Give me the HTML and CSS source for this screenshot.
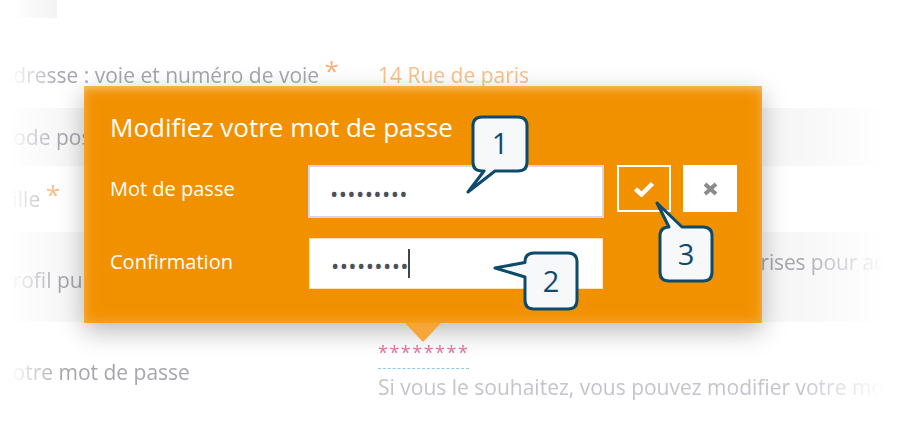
FILE: index.html
```html
<!DOCTYPE html>
<html lang="fr">
<head>
  <meta charset="UTF-8">
  <meta name="viewport" content="width=device-width, initial-scale=1.0">
  <title>Modifiez votre mot de passe</title>
  <link rel="stylesheet" href="styles.css">
</head>
<body>
  <div class="page">
    <div class="form">
      <div class="strip"><span class="strip-block"></span></div>

      <div class="row row-address">
        <div class="label">Adresse : voie et numéro de voie <span class="req">*</span></div>
        <div class="value value-orange">14 Rue de paris</div>
      </div>

      <div class="row row-band row-cp">
        <div class="label">Code postal <span class="req">*</span></div>
        <div class="value value-orange">75001</div>
      </div>

      <div class="row row-city">
        <div class="label">Ville <span class="req">*</span></div>
        <div class="value value-orange">Paris</div>
      </div>

      <div class="row row-band row-profile">
        <div class="label">Profil public</div>
        <div class="value value-top">Vos données restent visibles des entreprises pour accéder</div>
      </div>

      <div class="row row-password">
        <div class="label label-top">Votre mot de passe</div>
        <div class="value value-top">
          <span class="stars">********</span>
          <p class="help">Si vous le souhaitez, vous pouvez modifier votre mot de passe</p>
        </div>
      </div>
    </div>

    <div class="popup">
      <h2 class="popup-title">Modifiez votre mot de passe</h2>
      <div class="popup-row">
        <label class="popup-label">Mot de passe</label>
        <div class="field"><span class="dots">•••••••••</span></div>
        <button class="btn btn-ok" title="Valider">
          <svg width="22" height="16" viewBox="0 0 22 16"><path d="M2.5 8l6 5.5L19.5 2.5" fill="none" stroke="#fff" stroke-width="4.5"/></svg>
        </button>
        <button class="btn btn-cancel" title="Annuler">
          <svg width="15" height="14" viewBox="0 0 15 14"><path d="M2 2l11 10M13 2L2 12" fill="none" stroke="#8b8b8b" stroke-width="4"/></svg>
        </button>
      </div>
      <div class="popup-row popup-row-confirm">
        <label class="popup-label">Confirmation</label>
        <div class="field field-confirm"><span class="dots">•••••••••</span><span class="caret"></span></div>
      </div>
    </div>

    <!-- numbered annotations -->
    <svg class="callouts" width="898" height="441" viewBox="0 0 898 441">
      <g class="callout">
        <path d="M482 117H518Q527 117 527 126V162Q527 171 518 171H495L468 192L484 171H482Q473 171 473 162V126Q473 117 482 117Z"/>
        <text x="500" y="154">1</text>
      </g>
      <g class="callout">
        <path d="M534 253H568Q577 253 577 262V300Q577 309 568 309H534Q525 309 525 300V277L495 268L525 262.5V262Q525 253 534 253Z"/>
        <text x="551" y="292">2</text>
      </g>
      <g class="callout">
        <path d="M669 227L657 203L682 227H703Q712 227 712 236V272Q712 281 703 281H669Q660 281 660 272V236Q660 227 669 227Z"/>
        <text x="686" y="265">3</text>
      </g>
    </svg>
  </div>
</body>
</html>
```

FILE: styles.css
```css
* {
  box-sizing: border-box;
}
body {
  margin: 0;
  background: #fff;
  font-family: "Open Sans", "Liberation Sans", sans-serif;
}
.page {
  position: relative;
  width: 898px;
  height: 441px;
  overflow: hidden;
}

/* faded form behind the popup */
.form {
  color: #a6a6ae;
  font-size: 21px;
  filter: blur(0.6px);
  -webkit-mask-image: linear-gradient(90deg, transparent 10px, #000 60px, #000 800px, transparent 885px);
  mask-image: linear-gradient(90deg, transparent 10px, #000 60px, #000 800px, transparent 885px);
}
.strip {
  height: 18px;
  padding-left: 17px;
}
.strip-block {
  display: block;
  width: 40px;
  height: 18px;
  background: #f2f2f2;
}
.row {
  display: grid;
  grid-template-columns: 378px 1fr;
  align-items: center;
  white-space: nowrap;
  line-height: 28px;
}
.row-band {
  background: #f7f7f7;
}
.req {
  color: #f6b27a;
  font-size: 26px;
  vertical-align: top;
  position: relative;
  top: -5px;
}
.value-orange {
  color: #f6c18c;
}
.value-top,
.label-top {
  align-self: start;
}
.row-address {
  margin-top: 30px;
  height: 54px;
}
.row-cp {
  margin-top: 6px;
  height: 58px;
}
.row-city {
  height: 66px;
}
.row-profile {
  height: 90px;
  padding-top: 6px;
}
.row-profile .value {
  margin-top: 10px;
  letter-spacing: -0.15px;
}
.row-password .label {
  margin-top: 36px;
}
.stars {
  display: inline-block;
  margin-top: 18px;
  height: 29px;
  padding-bottom: 4px;
  color: #e8709e;
  font-size: 18px;
  letter-spacing: 1.5px;
  line-height: 24px;
  border-bottom: 1px dashed #8ec8e8;
}
.help {
  margin: 4px 0 0;
  color: #c4c4cc;
}

/* popup */
.popup {
  position: absolute;
  left: 84px;
  top: 86px;
  width: 678px;
  height: 237px;
  padding: 25px 25px 0 26px;
  background: #f29100;
  color: #fff;
  box-shadow: inset 0 6px 10px -4px rgba(255, 255, 255, 0.35), inset 0 0 14px rgba(255, 255, 255, 0.25), 0 8px 24px rgba(0, 0, 0, 0.28);
}
.popup::after {
  content: "";
  position: absolute;
  left: 321px;
  top: 100%;
  border-left: 18px solid transparent;
  border-right: 18px solid transparent;
  border-top: 19px solid #f5a53a;
}
.popup-title {
  margin: 0;
  font-size: 26px;
  font-weight: 400;
  line-height: 32px;
}
.popup-row {
  display: flex;
  align-items: flex-start;
  margin-top: 22px;
}
.popup-row-confirm {
  margin-top: 20px;
}
.popup-label {
  width: 198px;
  font-size: 20px;
  font-weight: 500;
  line-height: 48px;
}
.field {
  display: flex;
  align-items: center;
  width: 296px;
  height: 53px;
  padding-left: 20px;
  background: #fff;
  border: 2px solid #d2d6e6;
  color: #4a505e;
}
.field-confirm {
  width: 294px;
  height: 51px;
  margin-left: 1px;
  padding-left: 21px;
  border: 1px solid #fde2bb;
}
.dots {
  font-size: 22px;
  letter-spacing: 0.4px;
  padding-top: 3px;
}
.caret {
  display: inline-block;
  width: 2px;
  height: 29px;
  margin-left: -1px;
  background: #444;
}
.btn {
  display: flex;
  align-items: center;
  justify-content: center;
  width: 54px;
  height: 47px;
  margin-left: 13px;
  padding: 0;
  cursor: pointer;
}
.btn-ok {
  background: transparent;
  border: 2px solid #fff;
}
.btn-cancel {
  margin-left: 12px;
  background: #fff;
  border: none;
}

/* annotations */
.callouts {
  position: absolute;
  left: 0;
  top: 0;
  pointer-events: none;
}
.callout path {
  fill: #f7f8fa;
  stroke: #0e4a6c;
  stroke-width: 3;
  stroke-linejoin: round;
}
.callout text {
  fill: #0e4a6c;
  font-family: "Open Sans", "Liberation Sans", sans-serif;
  font-size: 29px;
  text-anchor: middle;
}
```
